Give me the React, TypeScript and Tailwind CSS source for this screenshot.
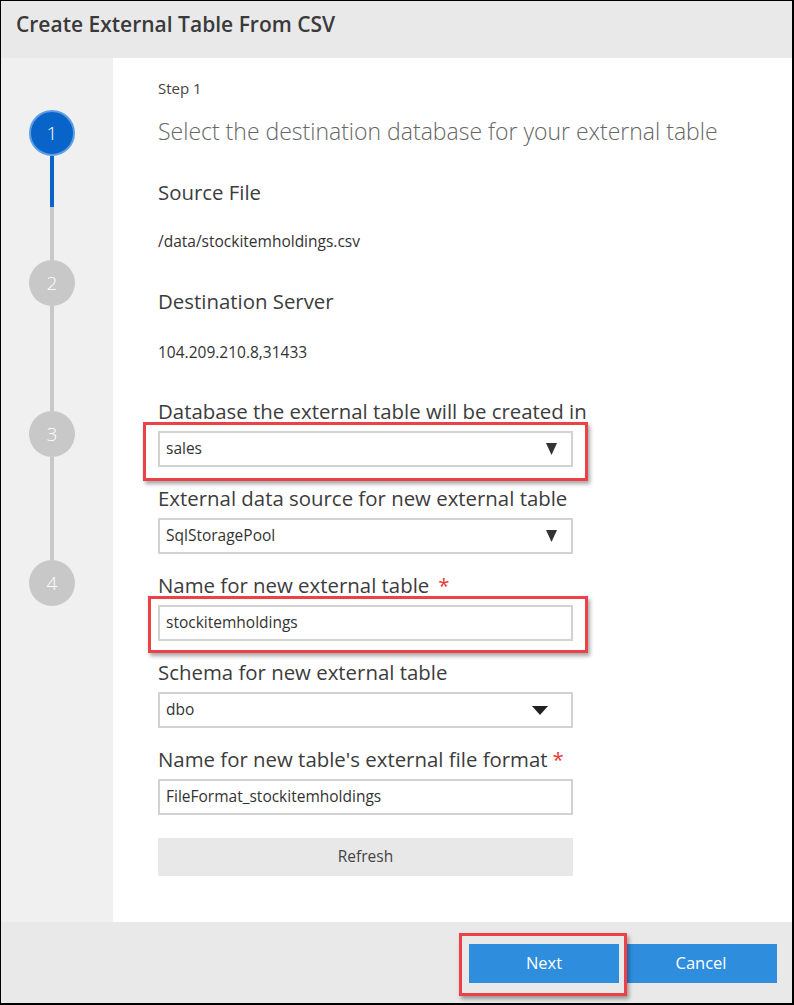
import type { ReactNode } from "react";

const font = { fontFamily: '"Open Sans", "Liberation Sans", sans-serif' };

function Caret({ wide = false }: { wide?: boolean }) {
  return wide ? (
    <svg width="16" height="9" viewBox="0 0 16 9" className="mr-[15px]">
      <path d="M0 0h16L8 9z" fill="#222" />
    </svg>
  ) : (
    <svg width="11" height="12" viewBox="0 0 11 12" className="mr-[6px]">
      <path d="M0 0h11L5.5 12z" fill="#333" />
    </svg>
  );
}

function Field({
  label,
  required,
  starGap = "ml-2",
  top = "mt-[18px]",
  children,
}: {
  label: string;
  required?: boolean;
  starGap?: string;
  top?: string;
  children: ReactNode;
}) {
  return (
    <div className={top}>
      <div className="h-[26px] whitespace-nowrap text-[20.4px] leading-[26px] text-[#3c3c3c]">
        {label}
        {required && <span className={`${starGap} text-[#e53935]`}>*</span>}
      </div>
      {children}
    </div>
  );
}

function Box({
  value,
  caret,
  wide,
  mark,
}: {
  value: string;
  caret?: boolean;
  wide?: boolean;
  mark?: string;
}) {
  return (
    <div className="relative mt-[7px]">
      {mark && (
        <div className={`absolute ${mark} border-[3px] border-[#ec4147] shadow-[2px_3px_4px_rgba(0,0,0,0.35)]`} />
      )}
      <div className="flex h-[36px] items-center justify-between border-2 border-[#d2d2d2] bg-white pl-[6px] pr-[8px] text-[15.5px] text-[#333]">
        <span>{value}</span>
        {caret && <Caret wide={wide} />}
      </div>
    </div>
  );
}

function StepDot({ n, active }: { n: number; active?: boolean }) {
  return (
    <div
      className={`flex h-[46px] w-[46px] items-center justify-center rounded-full text-[19px] font-light text-white ${
        active ? "border-2 border-[#5d9de3] bg-[#0864c8]" : "bg-[#c8c8c8]"
      }`}
    >
      {n}
    </div>
  );
}

export default function App() {
  return (
    <div
      style={font}
      className="flex h-[1005px] w-[794px] flex-col border-b-2 border-l border-r-2 border-t border-black bg-white"
    >
      {/* Header */}
      <div className="flex h-[57px] shrink-0 items-center bg-[#e9e9e9] pl-[15px]">
        <h1 className="-mt-[10px] text-[21px] font-semibold text-[#3a3a3a]">Create External Table From CSV</h1>
      </div>

      <div className="flex flex-1">
        {/* Steps rail */}
        <div className="flex w-[112px] shrink-0 flex-col bg-[#f0f0f0] pl-[28px] pt-[52px]">
          <StepDot n={1} active />
          <div className="ml-[21px] h-[51px] w-[4px] bg-[#0864c8]" />
          <div className="ml-[21px] h-[53px] w-[4px] bg-[#c8c8c8]" />
          <StepDot n={2} />
          <div className="ml-[21px] h-[105px] w-[4px] bg-[#c8c8c8]" />
          <StepDot n={3} />
          <div className="ml-[21px] h-[103px] w-[4px] bg-[#c8c8c8]" />
          <StepDot n={4} />
        </div>

        {/* Form */}
        <div className="w-[600px] pl-[45px] pt-[20px]">
          <div className="h-[20px] text-[15px] leading-[20px] text-[#444]">Step 1</div>
          <div className="mt-[18px] h-[30px] whitespace-nowrap text-[23px] font-light leading-[30px] text-[#666]">
            Select the destination database for your external table
          </div>

          <div className="mt-[33px] h-[26px] text-[20.4px] leading-[26px] text-[#3c3c3c]">Source File</div>
          <div className="mt-[26px] h-[20px] text-[15.5px] leading-[20px] text-[#333]">/data/stockitemholdings.csv</div>
          <div className="mt-[37px] h-[26px] text-[20.4px] leading-[26px] text-[#3c3c3c]">Destination Server</div>
          <div className="mt-[28px] h-[20px] text-[15.5px] leading-[20px] text-[#333]">104.209.210.8,31433</div>

          <div className="w-[415px]">
            <Field label="Database the external table will be created in" top="mt-[36px]">
              <Box value="sales" caret mark="-left-[15px] -right-[15px] -top-[9px] -bottom-[14px]" />
            </Field>
            <Field label="External data source for new external table">
              <Box value="SqlStoragePool" caret />
            </Field>
            <Field label="Name for new external table" required starGap="ml-[9px]">
              <Box value="stockitemholdings" mark="-left-[10px] -right-[15px] -top-[9px] -bottom-[12px]" />
            </Field>
            <Field label="Schema for new external table">
              <Box value="dbo" caret wide />
            </Field>
            <Field label="Name for new table's external file format" required starGap="ml-[5px]">
              <Box value="FileFormat_stockitemholdings" />
            </Field>
            <button className="mt-[23px] h-[38px] w-full bg-[#e8e8e8] text-[15.5px] text-[#444]">Refresh</button>
          </div>
        </div>
      </div>

      {/* Footer */}
      <div className="flex h-[81px] shrink-0 items-start justify-end gap-[6px] bg-[#e9e9e9] pr-[15px] pt-[22px]">
        <div className="relative">
          <div className="absolute -bottom-[13px] -left-[10px] -right-[8px] -top-[11px] border-[3px] border-[#ec4147] shadow-[2px_3px_4px_rgba(0,0,0,0.35)]" />
          <button className="relative h-[39px] w-[150px] bg-[#2e8ddc] text-[16.5px] text-white">Next</button>
        </div>
        <button className="h-[39px] w-[152px] bg-[#2e8ddc] text-[16.5px] text-white">Cancel</button>
      </div>
    </div>
  );
}
